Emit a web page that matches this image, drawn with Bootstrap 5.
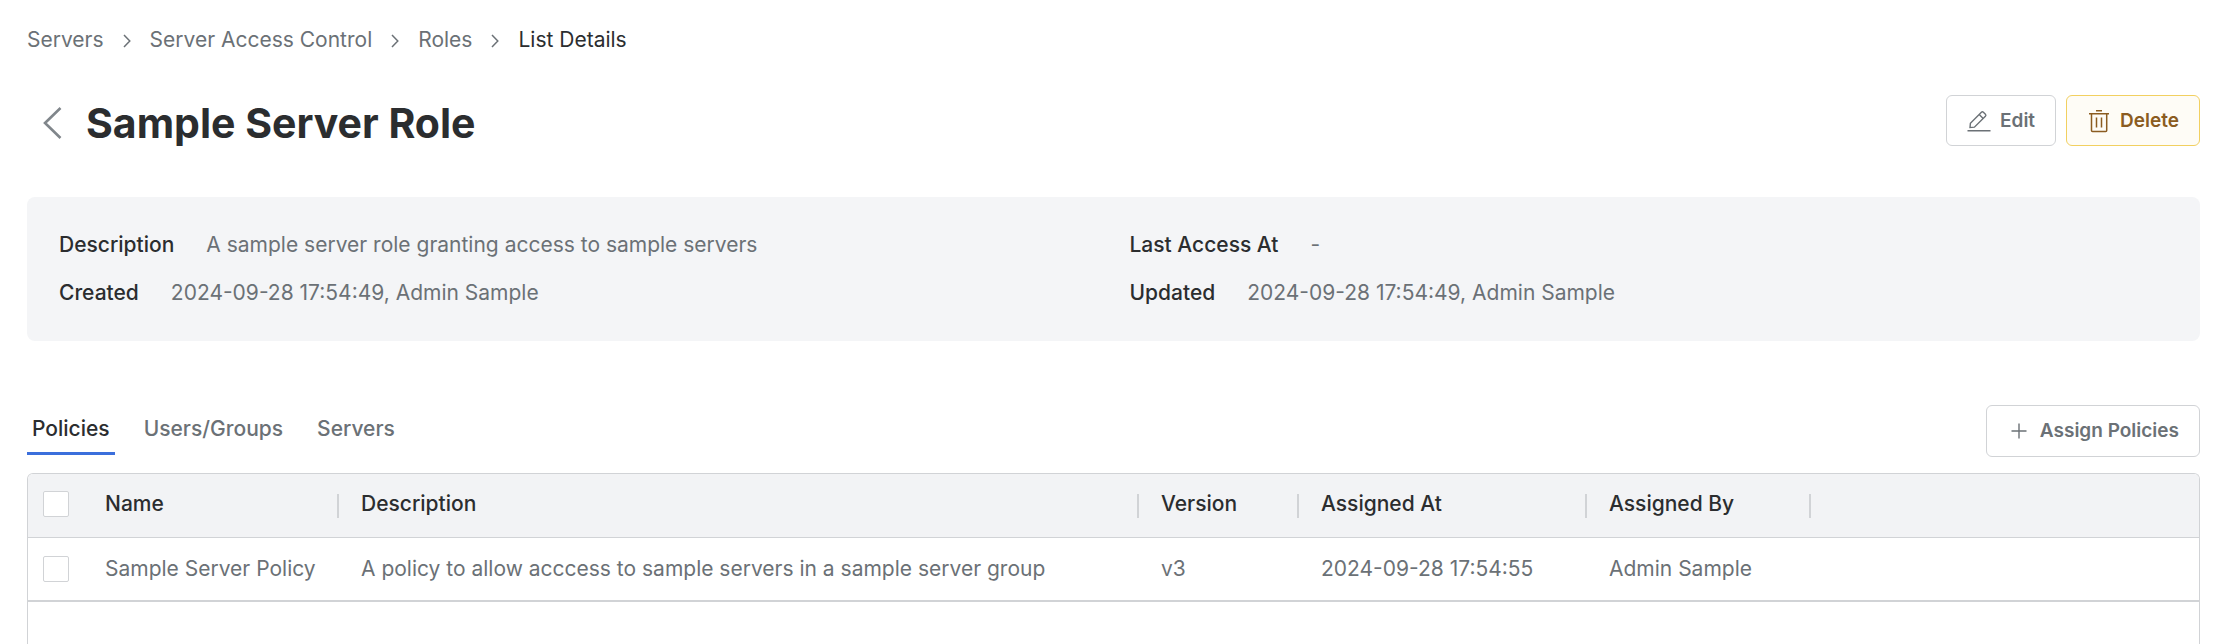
<!DOCTYPE html>
<html lang="en">
<head>
<meta charset="utf-8">
<meta name="viewport" content="width=device-width, initial-scale=1">
<title>Sample Server Role</title>
<link href="https://cdn.jsdelivr.net/npm/bootstrap@5.3.0/dist/css/bootstrap.min.css" rel="stylesheet">
<style>
  :root { --ink: #2b2d2f; --soft: #6b7176; --line: #d1d3d6; }
  body { font-family: Inter, "Liberation Sans", sans-serif; font-size: 21px; line-height: 30px; color: var(--soft); background: #fff; }
  .page { padding: 25px 24px 0 27px; }
  .ink { color: var(--ink); }
  svg { display: block; fill: none; stroke: currentColor; flex: none; }
  .crumbs { gap: 19px; }
  .crumbs svg { margin-top: 2px; }
  .crumbs a { color: inherit; text-decoration: none; }
  .title-row { margin-top: 40px; }
  .back { color: #80868b; padding: 0 0 0 15px; border: 0; background: none; }
  h1 { font-size: 41px; line-height: 56px; font-weight: 700; }
  .action { --bs-btn-font-size: 19px; --bs-btn-line-height: 27px; --bs-btn-font-weight: 600; --bs-btn-border-radius: 6px;
    --bs-btn-padding-x: 20px; --bs-btn-padding-y: 11px; --bs-btn-color: var(--soft); --bs-btn-border-color: var(--line); --bs-btn-bg: #fff;
    gap: 9px; }
  .action.danger { --bs-btn-color: #8b5c21; --bs-btn-border-color: #f2d060; --bs-btn-bg: #fefcf6; }
  .actions { gap: 10px; }
  .info { margin-top: 46px; padding: 33px 32px; background: #f4f5f7; border-radius: 8px; row-gap: 18px; column-gap: 32px; display: grid; grid-template-columns: 1fr 1fr; }
  .info > div { gap: 32px; }
  .info dt { font-weight: 500; }
  .tab-row { margin-top: 64px; }
  .tab-row .action { --bs-btn-line-height: 28px; }
  .tabs { gap: 24px; padding-bottom: 2px; }
  .tabs .nav-link { padding: 0 5px 8px; color: var(--soft); font-weight: 500; border-bottom: 3px solid transparent; }
  .tabs .nav-link.active { color: var(--ink); border-color: #3b6fdc; }
  .grid-box { margin-top: 16px; border: 1px solid var(--line); border-bottom: 0; border-radius: 6px 6px 0 0; overflow: hidden; }
  .policies { table-layout: fixed; --bs-table-bg: transparent; --bs-table-color: var(--soft); color: var(--soft); }
  .policies > :not(caption) > * > * { padding: 16px 0 16px 22px; vertical-align: middle; border-bottom: 1px solid var(--line); }
  .policies > thead > tr > th { padding-top: 15px; padding-bottom: 18px; background: #f2f3f5; color: var(--ink); font-weight: 500; }
  .policies > tbody > tr > td { border-bottom-width: 2px; }
  .policies > thead > tr > .split { background: linear-gradient(var(--line), var(--line)) right center / 2px 24px no-repeat #f2f3f5; }
  .policies > :not(caption) > * > .pick { padding-left: 15px; }
  .pick .form-check-input { display: block; width: 26px; height: 26px; margin: 0; border: 1px solid var(--line); border-radius: 2px; }
  .c-pick { width: 55px; } .c-name { width: 256px; } .c-desc { width: 800px; } .c-ver { width: 160px; } .c-at { width: 288px; } .c-by { width: 224px; }
</style>
</head>
<body>
<main class="page d-flex flex-column min-vh-100">
  <nav class="crumbs d-flex align-items-center" aria-label="Breadcrumb">
    <a href="#">Servers</a>
    <svg width="8" height="14" viewBox="0 0 8 14" stroke-width="1.5"><path d="M1 1 6.800 7 1 13"/></svg>
    <a href="#">Server Access Control</a>
    <svg width="8" height="14" viewBox="0 0 8 14" stroke-width="1.5"><path d="M1 1 6.800 7 1 13"/></svg>
    <a href="#">Roles</a>
    <svg width="8" height="14" viewBox="0 0 8 14" stroke-width="1.5"><path d="M1 1 6.800 7 1 13"/></svg>
    <span class="ink" aria-current="page">List Details</span>
  </nav>

  <header class="title-row d-flex justify-content-between align-items-start">
    <div class="d-flex align-items-center">
      <button type="button" class="back" aria-label="Back"><svg width="44" height="32" viewBox="0 0 44 32" stroke-width="2.6"><path d="M18.500 1 3 16 18.500 31"/></svg></button>
      <h1 class="ink m-0">Sample Server Role</h1>
    </div>
    <div class="d-flex actions">
      <button type="button" class="btn action d-flex align-items-center"><svg width="24" height="24" viewBox="0 0 24 24" stroke-width="1.4"><path d="M.5 21.800h23M3 18.600l.4-4.400L14.400 3.200q1-1 2 0l2 2q1 1 0 2L7.400 18.200zM12.200 5.400l4 4"/></svg>Edit</button>
      <button type="button" class="btn action danger d-flex align-items-center"><svg width="24" height="24" viewBox="0 0 24 24" stroke-width="1.5"><path d="M2 4.800h20M9 1.800h6M4.500 5V21.500q0 1 1 1h13.200q1 0 1-1V5M9.500 8.500V18.500M14.500 8.500V18.500"/></svg>Delete</button>
    </div>
  </header>

  <dl class="info mb-0">
    <div class="d-flex"><dt class="ink">Description</dt><dd class="m-0">A sample server role granting access to sample servers</dd></div>
    <div class="d-flex"><dt class="ink">Last Access At</dt><dd class="m-0">-</dd></div>
    <div class="d-flex"><dt class="ink">Created</dt><dd class="m-0">2024-09-28 17:54:49, Admin Sample</dd></div>
    <div class="d-flex"><dt class="ink">Updated</dt><dd class="m-0">2024-09-28 17:54:49, Admin Sample</dd></div>
  </dl>

  <div class="tab-row d-flex justify-content-between align-items-end">
    <nav class="nav tabs">
      <a class="nav-link active" aria-current="page" href="#">Policies</a>
      <a class="nav-link" href="#">Users/Groups</a>
      <a class="nav-link" href="#">Servers</a>
    </nav>
    <button type="button" class="btn action d-flex align-items-center"><svg width="24" height="24" viewBox="0 0 24 24" stroke-width="1.4"><path d="M4.500 12h15M12 4.500v15"/></svg>Assign Policies</button>
  </div>

  <div class="grid-box flex-grow-1">
    <table class="table policies m-0">
      <colgroup><col class="c-pick"><col class="c-name"><col class="c-desc"><col class="c-ver"><col class="c-at"><col class="c-by"><col></colgroup>
      <thead>
        <tr>
          <th class="pick"><input class="form-check-input" type="checkbox" aria-label="Select all policies"></th>
          <th class="split" scope="col">Name</th>
          <th class="split" scope="col">Description</th>
          <th class="split" scope="col">Version</th>
          <th class="split" scope="col">Assigned At</th>
          <th class="split" scope="col">Assigned By</th>
          <th></th>
        </tr>
      </thead>
      <tbody>
        <tr>
          <td class="pick"><input class="form-check-input" type="checkbox" aria-label="Select Sample Server Policy"></td>
          <td>Sample Server Policy</td>
          <td>A policy to allow acccess to sample servers in a sample server group</td>
          <td>v3</td>
          <td>2024-09-28 17:54:55</td>
          <td>Admin Sample</td>
          <td></td>
        </tr>
      </tbody>
    </table>
  </div>
</main>
<script src="https://cdn.jsdelivr.net/npm/bootstrap@5.3.0/dist/js/bootstrap.bundle.min.js"></script>
</body>
</html>
